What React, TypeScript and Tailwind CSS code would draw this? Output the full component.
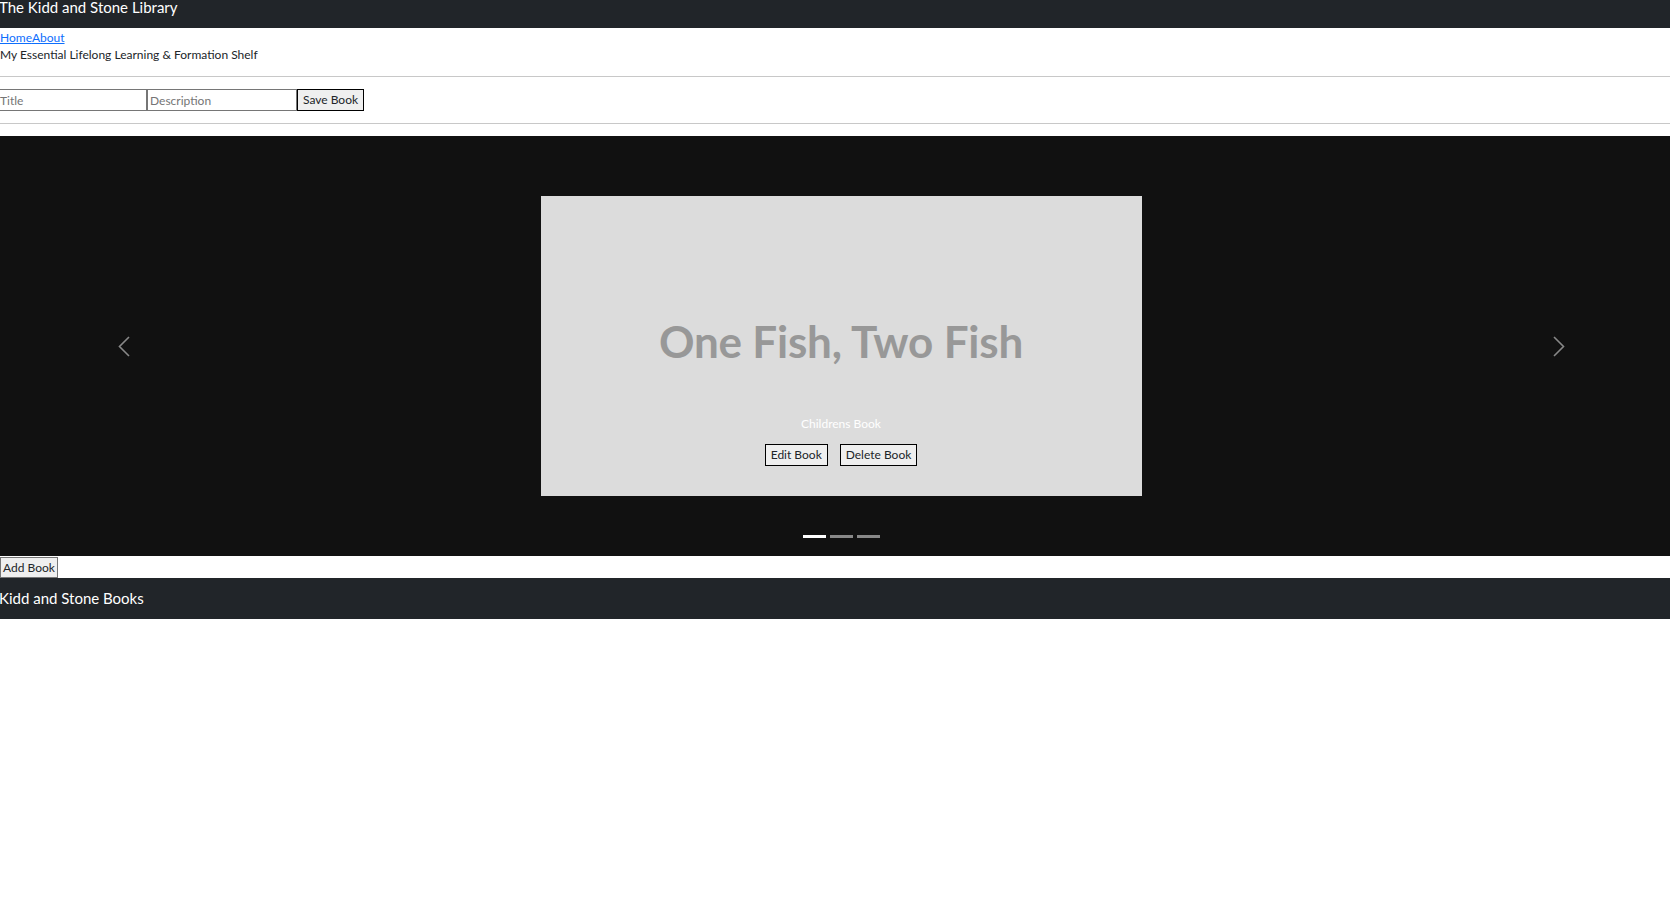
const books = [
  { title: 'One Fish, Two Fish', description: 'Childrens Book' },
  { title: 'The Hobbit', description: 'Fantasy' },
  { title: 'Confessions', description: 'Philosophy' },
]

function Carousel() {
  const active = 0
  const book = books[active]
  return (
    <div className="mt-[12px] w-[calc(100%+12px)] h-[420px] bg-[#111111] flex flex-col">
      <div className="flex flex-1 items-start pt-[60px]">
        <button className="w-[247px] h-[300px] flex items-center justify-center text-[#888888]">
          <svg width="12" height="21" viewBox="0 0 12 21" fill="none" stroke="currentColor" strokeWidth="1.6">
            <polyline points="11,1 1.5,10.5 11,20" />
          </svg>
        </button>
        <div className="flex-1 flex justify-center">
          <div className="w-[601px] h-[300px] bg-[#dcdcdc] flex flex-col items-center">
            <div className="h-[216px] flex items-end pb-[49px]">
              <span className="text-[44px] leading-[44px] font-bold text-[#989898] tracking-[-0.2px]">{book.title}</span>
            </div>
            <p className="mt-[3px] text-[12px] leading-[18px] text-white">{book.description}</p>
            <div className="mt-[11px] flex gap-[12px]">
              <button className="h-[22px] px-[5px] text-[12px] bg-[#efefef] border border-black">Edit Book</button>
              <button className="h-[22px] px-[5px] text-[12px] bg-[#efefef] border border-black">Delete Book</button>
            </div>
          </div>
        </div>
        <button className="w-[247px] h-[300px] flex items-center justify-center text-[#888888]">
          <svg width="12" height="21" viewBox="0 0 12 21" fill="none" stroke="currentColor" strokeWidth="1.6">
            <polyline points="1,1 10.5,10.5 1,20" />
          </svg>
        </button>
      </div>
      <div className="flex justify-center gap-[4px] pb-[18px]">
        {books.map((b, i) => (
          <span key={b.title} className={i === active ? 'w-[23px] h-[3px] bg-white' : 'w-[23px] h-[3px] bg-[#888888]'} />
        ))}
      </div>
    </div>
  )
}

export default function App() {
  return (
    <div className="min-h-[907px] bg-white overflow-hidden font-['Lato',sans-serif] text-[#212529]">
      <header className="h-[28px] bg-[#212529] text-white">
        <h1 className="text-[15px] leading-[14px] -ml-[1px]">The Kidd and Stone Library</h1>
      </header>
      <nav className="mt-[1px] text-[12px] leading-[18px]">
        <a href="#" className="text-[#0d6efd] underline">Home</a>
        <a href="#" className="text-[#0d6efd] underline">About</a>
      </nav>
      <p className="-mt-[1px] text-[12px] leading-[18px]">My Essential Lifelong Learning &amp; Formation Shelf</p>
      <hr className="mt-[12px] border-[#c8c8c8]" />
      <form className="mt-[12px] mb-[12px] flex -ml-[3px] text-[12px]">
        <input placeholder="Title" className="w-[150px] h-[22px] px-[2px] border border-[#767676] placeholder:text-[#757575]" />
        <input placeholder="Description" className="w-[150px] h-[22px] px-[2px] border border-[#767676] placeholder:text-[#757575]" />
        <button type="button" className="h-[22px] px-[5px] bg-[#efefef] border border-black">Save Book</button>
      </form>
      <hr className="border-[#c8c8c8]" />
      <Carousel />
      <button className="block mt-[1px] h-[21px] px-[2px] text-[12px] bg-[#efefef] border border-[#767676]">Add Book</button>
      <footer className="h-[41px] bg-[#212529] text-white flex items-center">
        <span className="text-[15px] -ml-[1px]">Kidd and Stone Books</span>
      </footer>
    </div>
  )
}
